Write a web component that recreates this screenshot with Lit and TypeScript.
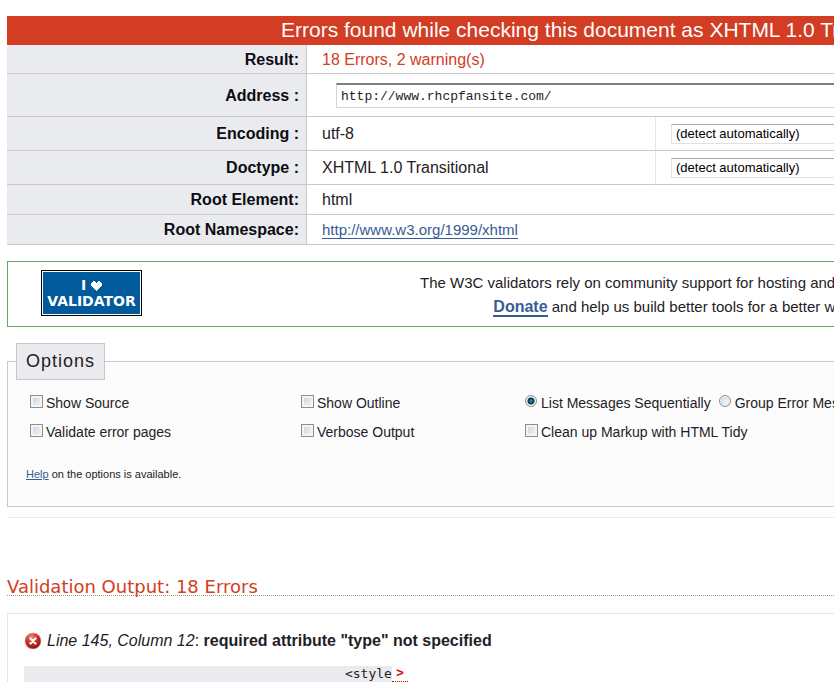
import { LitElement, html, css, svg } from "lit";
import { customElement, state } from "lit/decorators.js";

@customElement("app-root")
export class AppRoot extends LitElement {
  @state() private order = "sequential";

  static styles = css`
    :host {
      display: flex;
      flex-direction: column;
      box-sizing: border-box;
      min-height: 100vh;
      padding: 16px 0 0 7px;
      overflow: hidden;
      background: #fff;
      color: #1f2126;
      font: 16px/24px "Liberation Sans", Arial, sans-serif;
    }
    * { box-sizing: border-box; }
    a { color: #365d95; }
    input, select { margin: 0; font: inherit; color: inherit; }

    .banner {
      margin: 0;
      height: 29px;
      padding-left: 274px;
      background: #d23d24;
      color: #fff;
      font-size: 21px;
      line-height: 28px;
      font-weight: 400;
      white-space: nowrap;
    }

    .summary { width: 100%; table-layout: fixed; border-collapse: separate; border-spacing: 0; }
    .summary th, .summary td { height: 30px; padding: 0; border-bottom: 1px solid #c8c8c8; }
    .summary th {
      padding-right: 7px;
      border-right: 1px solid #c8c8c8;
      background: #eaebee;
      color: #0c0c12;
      text-align: right;
    }
    .summary td { padding-left: 15px; }
    .summary .short th, .summary .short td { height: 29px; padding-top: 2px; }
    .summary .tall th, .summary .tall td { height: 43px; }
    .summary .tall th { padding-top: 2px; }
    .summary .medium th, .summary .medium td { height: 34px; }
    .summary .pick { padding-left: 15px; border-left: 1px solid #e6e6e6; }
    .label-col { width: 300px; }
    .value-col { width: 348px; }
    .errors { color: #d23d24; }
    .ns {
      display: inline-block;
      border-bottom: 1px solid #365d95;
      font-size: 15px;
      line-height: 16px;
      text-decoration: none;
    }

    .address {
      display: block;
      width: calc(100% - 14px);
      height: 25px;
      margin-left: 14px;
      padding: 2px 4px 0;
      border: 1px solid #d4d4d4;
      border-top: 2px solid #808080;
      border-right: 0;
      background: #fff;
      font: 13px "Liberation Mono", monospace;
    }
    .choice {
      display: block;
      width: 100%;
      height: 20px;
      padding: 0 4px;
      appearance: none;
      border: 1px solid #dde0e6;
      border-top-color: #a5a8b0;
      border-right: 0;
      border-radius: 0;
      background: #fff;
      color: #000;
      font-size: 13px;
      line-height: 18px;
    }

    .donate {
      display: flex;
      align-items: flex-start;
      gap: 278px;
      height: 66px;
      margin-top: 16px;
      padding: 8px 0 0 33px;
      border: 1px solid #5fa668;
      border-right: 0;
      white-space: nowrap;
    }
    .badge {
      flex: none;
      display: flex;
      flex-direction: column;
      align-items: center;
      justify-content: center;
      width: 101px;
      height: 46px;
      border: 1px solid #000;
      outline: 1px solid #fff;
      outline-offset: -2px;
      background: #005a9c;
      color: #fff;
      font: 700 14px/16px "DejaVu Sans", sans-serif;
      text-decoration: none;
    }
    .love { display: flex; align-items: center; gap: 5px; }
    .heart { width: 11px; height: 11px; }
    .appeal { margin: 0; padding-top: 1px; font-size: 15px; text-align: center; }
    .give {
      display: inline-block;
      border-bottom: 2px solid #365d95;
      font-size: 16px;
      font-weight: 700;
      line-height: 17px;
      text-decoration: none;
    }

    .options {
      height: 164px;
      min-width: 0;
      margin: 16px 0 0;
      padding: 0 0 0 18px;
      border: 1px solid #c8c8c8;
      border-right: 0;
      background: #fcfcfc;
    }
    .title {
      height: 37px;
      margin-left: -10px;
      padding: 0 9px;
      border: 1px solid #c8c8c8;
      background: #eaebee;
      font-size: 18px;
      line-height: 35px;
      letter-spacing: 1px;
    }
    .grid {
      display: grid;
      grid-template-columns: 271px 224px auto;
      grid-auto-rows: 29px;
      align-items: center;
      margin-top: 8px;
      padding-left: 4px;
      font-size: 14px;
      white-space: nowrap;
    }
    .group { display: flex; gap: 8px; }
    .opt { display: flex; align-items: center; gap: 3px; }
    .box, .dot {
      flex: none;
      width: 13px;
      height: 13px;
      margin-bottom: 3px;
      appearance: none;
      border: 1px solid #8e8f8f;
    }
    .box {
      background: linear-gradient(135deg, #cdd0d6, #f6f6f6);
      box-shadow: inset 0 0 0 2px #f4f4f4;
    }
    .dot {
      width: 12px;
      height: 12px;
      margin-right: 1px;
      border-radius: 50%;
      background: radial-gradient(circle at 60% 60%, #f6f6f6, #c9ccd2);
      box-shadow: inset 0 0 0 1px #f4f4f4;
    }
    .dot:checked {
      background: radial-gradient(circle at 50% 50%, #4b9cc4 0, #15506f 2px, #0c2f46 3px, #e4e8ec 4px);
    }
    .help { margin: 16px 0 0; font-size: 11px; line-height: 24px; }

    .rule { width: 100%; height: 1px; margin: 10px 0 0; border: 0; background: #ebebeb; }

    .output {
      margin: 60px 0 0;
      border-bottom: 1px dotted #a89c84;
      color: #d23d24;
      font: 18px/17px "DejaVu Sans", sans-serif;
    }
    .messages {
      flex: 1;
      margin: 17px 0 0;
      padding: 15px 0 0 16px;
      border: 1px solid #e6e6e6;
      border-width: 1px 0 0 1px;
      list-style: none;
    }
    .message { display: flex; align-items: center; gap: 5px; }
    .cross { width: 18px; height: 18px; }
    .code {
      display: flex;
      height: 16px;
      margin: 13px 0 0;
      font: 13px/16px "Liberation Mono", monospace;
    }
    .src { background: #eaebee; }
    .spot { padding: 0 4px; border-bottom: 1px dotted #c00; color: #d00; font-weight: 700; }
  `;

  private check(label: string) {
    return html`<label class="opt"><input class="box" type="checkbox" />${label}</label>`;
  }

  private radio(label: string, value: string) {
    return html`<label class="opt"
      ><input
        class="dot"
        type="radio"
        name="order"
        .checked=${this.order === value}
        @change=${() => (this.order = value)}
      />${label}</label
    >`;
  }

  private heart = svg`<path d="M2 1h2v1h1v1h1V2h1V1h2v1h1v1h1v3h-1v1H9v1H8v1H7v1H6v1H5v-1H4V9H3V8H2V7H1V6H0V3h1V2h1z" fill="#fff"/>`;

  render() {
    return html`
      <h2 class="banner">Errors found while checking this document as XHTML 1.0 Transitional!</h2>
      <table class="summary">
        <colgroup>
          <col class="label-col" />
          <col class="value-col" />
          <col />
        </colgroup>
        <tr class="short">
          <th scope="row">Result:</th>
          <td colspan="2" class="errors">18 Errors, 2 warning(s)</td>
        </tr>
        <tr class="tall">
          <th scope="row"><label for="uri">Address :</label></th>
          <td colspan="2"><input class="address" id="uri" type="text" value="http://www.rhcpfansite.com/" /></td>
        </tr>
        <tr class="medium">
          <th scope="row"><label for="charset">Encoding :</label></th>
          <td>utf-8</td>
          <td class="pick"><select class="choice" id="charset"><option>(detect automatically)</option></select></td>
        </tr>
        <tr class="medium">
          <th scope="row"><label for="doctype">Doctype :</label></th>
          <td>XHTML 1.0 Transitional</td>
          <td class="pick"><select class="choice" id="doctype"><option>(detect automatically)</option></select></td>
        </tr>
        <tr>
          <th scope="row">Root Element:</th>
          <td colspan="2">html</td>
        </tr>
        <tr>
          <th scope="row">Root Namespace:</th>
          <td colspan="2"><a class="ns" href="#xhtml">http://www.w3.org/1999/xhtml</a></td>
        </tr>
      </table>

      <section class="donate">
        <a class="badge" href="#donate">
          <span class="love">I <svg class="heart" viewBox="0 0 11 11" shape-rendering="crispEdges">${this.heart}</svg></span>
          <span>VALIDATOR</span>
        </a>
        <p class="appeal">
          The W3C validators rely on community support for hosting and development.<br />
          <a class="give" href="#donate">Donate</a> and help us build better tools for a better web.
        </p>
      </section>

      <fieldset class="options">
        <legend class="title">Options</legend>
        <div class="grid">
          ${this.check("Show Source")} ${this.check("Show Outline")}
          <div class="group">
            ${this.radio("List Messages Sequentially", "sequential")}
            ${this.radio("Group Error Messages by Type", "grouped")}
          </div>
          ${this.check("Validate error pages")} ${this.check("Verbose Output")}
          ${this.check("Clean up Markup with HTML Tidy")}
        </div>
        <p class="help"><a href="#help">Help</a> on the options is available.</p>
      </fieldset>
      <hr class="rule" />

      <h3 class="output">Validation Output: 18 Errors</h3>
      <ol class="messages">
        <li>
          <div class="message">
            <svg class="cross" viewBox="0 0 18 18" aria-label="Error">
              <defs>
                <radialGradient id="ball" cx=".4" cy=".25" r=".75">
                  <stop offset="0" stop-color="#ee8a7c" />
                  <stop offset=".5" stop-color="#cf2f22" />
                  <stop offset="1" stop-color="#8f1410" />
                </radialGradient>
              </defs>
              <circle cx="9" cy="9" r="8" fill="url(#ball)" stroke="#c9a29c" stroke-width=".6" />
              <path d="M6.5 6.5l5 5M11.5 6.5l-5 5" stroke="#fff" stroke-width="2.4" stroke-linecap="round" />
            </svg>
            <span><em>Line 145, Column 12</em>: <strong>required attribute "type" not specified</strong></span>
          </div>
          <pre class="code"><code class="src">${" ".repeat(41)}&lt;style</code><strong class="spot">&gt;</strong></pre>
        </li>
      </ol>
    `;
  }
}
